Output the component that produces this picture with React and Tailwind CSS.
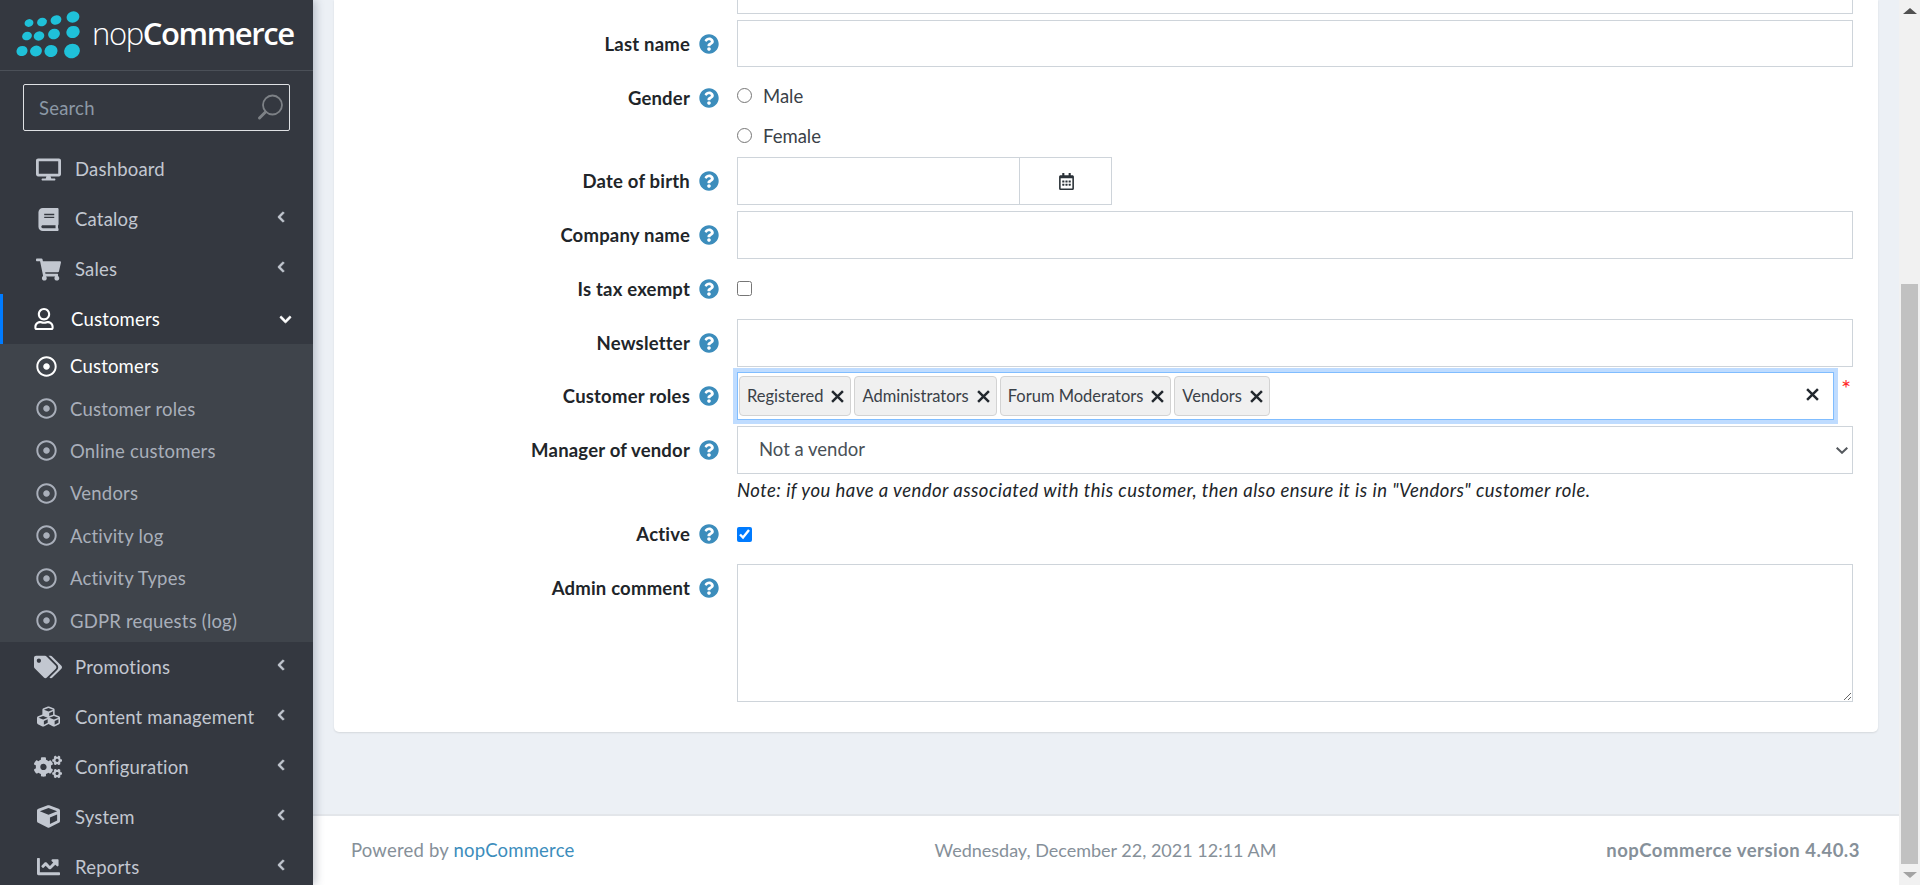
import React from "react";
import {
  FaDesktop, FaBook, FaShoppingCart, FaRegUser, FaTags, FaCubes, FaCogs, FaCube, FaChartLine,
  FaRegDotCircle, FaChevronLeft, FaChevronDown, FaQuestionCircle, FaRegCalendarAlt,
} from "react-icons/fa";

const font = "font-['Lato','Liberation_Sans',sans-serif]";

function Logo() {
  const dots = [
    [29, 24, 4.5, 3.8], [42, 23, 5, 4.2], [56, 21, 5.5, 4.6], [73, 18, 6.5, 5.6],
    [27, 37, 5, 4.2], [39, 37, 5.4, 4.6], [54, 35, 6, 5.2], [73, 33, 6.8, 6],
    [22, 52, 5.6, 5], [36, 52, 6, 5.4], [51, 52, 6.6, 6], [72, 52, 8, 7.2],
  ];
  return (
    <svg width="84" height="70" viewBox="0 0 84 70" className="shrink-0">
      {dots.map(([x, y, rx, ry]) => (
        <ellipse key={`${x}-${y}`} cx={x} cy={y} rx={rx} ry={ry} fill="#1fc1d9" transform={`rotate(-20 ${x} ${y})`} />
      ))}
    </svg>
  );
}

function SearchGlyph() {
  return (
    <svg width="28" height="28" viewBox="0 0 28 28" fill="none" stroke="#7d8186">
      <circle cx="16.5" cy="11" r="9.5" strokeWidth="1.8" />
      <path d="M9.5 18 L3.5 24" strokeWidth="3" strokeLinecap="round" />
    </svg>
  );
}

function CloseGlyph({ size = 13 }) {
  return (
    <svg width={size} height={size} viewBox="0 0 12 12" fill="none" stroke="#22282e" strokeWidth="2.3" className="shrink-0">
      <path d="M1 1 L11 11 M11 1 L1 11" />
    </svg>
  );
}

function NavItem({ icon: Icon, label, size = 25 }) {
  return (
    <div className="h-[50px] flex items-center text-[#c2c7d0]">
      <span className="w-[75px] flex justify-center pl-[21px] shrink-0">
        <Icon style={{ fontSize: size }} />
      </span>
      <span className="flex-1 whitespace-nowrap pt-[2px]">{label}</span>
    </div>
  );
}

function ParentItem({ icon, label, size }) {
  return (
    <div className="relative">
      <NavItem icon={icon} label={label} size={size} />
      <FaChevronLeft className="absolute right-[26px] top-[17px] text-[#c2c7d0] text-[12px] stroke-current stroke-[30]" />
    </div>
  );
}

function SubItem({ label, active }) {
  return (
    <div className={`h-[42.4px] flex items-center pl-[36px] gap-[13px] ${active ? "text-white" : "text-[#a9afba]"}`}>
      <FaRegDotCircle className="text-[21px] shrink-0" />
      <span className="whitespace-nowrap pt-[2px]">{label}</span>
    </div>
  );
}

function Sidebar() {
  return (
    <aside className="w-[313px] shrink-0 h-[885px] bg-[#343840] relative z-10 shadow-[3px_0_8px_rgba(40,50,80,0.25)] overflow-hidden text-[18.5px] tracking-[0.2px]">
      <div className="h-[71px] border-b border-[#4b5058] flex items-center pb-[3px]">
        <Logo />
        <span className="text-white text-[31px] leading-none ml-[8px] font-['Open_Sans',sans-serif] tracking-[-1.4px]">
          <span className="font-light">nop</span><span className="font-semibold">Commerce</span>
        </span>
      </div>
      <div className="mx-[23px] mt-[13px] h-[47px] border border-[#dfe1e4] rounded-[2px] flex items-center justify-between pl-[15px] pr-[5px] text-[#8c98a6]">
        <span className="pt-[2px]">Search</span>
        <SearchGlyph />
      </div>
      <div className="mt-[13px]">
        <NavItem icon={FaDesktop} label="Dashboard" />
        <ParentItem icon={FaBook} label="Catalog" size={23} />
        <ParentItem icon={FaShoppingCart} label="Sales" />
        <div className="h-[50px] border-l-[3px] border-[#007bff] flex items-center text-white relative">
          <span className="w-[68px] flex justify-center pl-[14px] shrink-0">
            <FaRegUser className="text-[22px]" />
          </span>
          <span className="pt-[2px]">Customers</span>
          <FaChevronDown className="absolute right-[21px] top-[19px] text-[13px] stroke-current stroke-[30]" />
        </div>
        <div className="bg-[#3f444b] pt-[1px]">
          <SubItem label="Customers" active />
          <SubItem label="Customer roles" />
          <SubItem label="Online customers" />
          <SubItem label="Vendors" />
          <SubItem label="Activity log" />
          <SubItem label="Activity Types" />
          <SubItem label="GDPR requests (log)" />
        </div>
        <ParentItem icon={FaTags} label="Promotions" size={28} />
        <ParentItem icon={FaCubes} label="Content management" size={23} />
        <ParentItem icon={FaCogs} label="Configuration" size={28} />
        <ParentItem icon={FaCube} label="System" size={23} />
        <ParentItem icon={FaChartLine} label="Reports" size={23} />
      </div>
    </aside>
  );
}

function Label({ text, height = "h-[48px]" }) {
  return (
    <div className={`w-[403px] shrink-0 ${height} flex items-center justify-end pr-[18px] gap-[9px]`}>
      <span className="font-bold text-[#212529] whitespace-nowrap pt-[2px] tracking-[0.2px]">{text}</span>
      <FaQuestionCircle className="text-[#3c8dbc] text-[20px] shrink-0" />
    </div>
  );
}

const inputClass = "block w-full border border-[#ced4da] bg-white";

function Chip({ text }) {
  return (
    <span className="h-[40px] flex items-center gap-[8px] pl-[7px] pr-[6px] bg-[#f0f0f0] border border-[#d3d3d3] rounded-[4px] text-[#3a4148] whitespace-nowrap text-[16.5px]">
      {text}
      <CloseGlyph />
    </span>
  );
}

function CustomerForm() {
  return (
    <section className="bg-white mx-[21px] rounded-b-[5px] shadow-[0_1px_2px_rgba(0,0,0,0.1)] pr-[25px] pb-[30px] text-[18.5px] text-[#212529]">
      <div className="ml-[403px] h-[14px] border border-t-0 border-[#ced4da]" />

      <div className="flex mt-[6px]">
        <Label text="Last name" height="h-[47px]" />
        <input className={`${inputClass} h-[47px]`} />
      </div>

      <div className="flex mt-[9px]">
        <Label text="Gender" height="h-[44px]" />
        <div className="flex flex-col">
          <label className="h-[40px] flex items-center gap-[11px] text-[#3a4148]">
            <input type="radio" name="gender" className="w-[15px] h-[15px] m-0 -mt-[2px]" />
            <span className="pt-[2px]">Male</span>
          </label>
          <label className="h-[40px] flex items-center gap-[11px] text-[#3a4148]">
            <input type="radio" name="gender" className="w-[15px] h-[15px] m-0 -mt-[2px]" />
            <span className="pt-[2px]">Female</span>
          </label>
        </div>
      </div>

      <div className="flex mt-[1px]">
        <Label text="Date of birth" />
        <div className="flex w-[375px] h-[48px] border border-[#ced4da]">
          <input className="w-[282px] h-full border-r border-[#ced4da]" />
          <div className="flex-1 flex items-center justify-center pl-[2px] text-[#2b3238]">
            <FaRegCalendarAlt className="text-[17px]" />
          </div>
        </div>
      </div>

      <div className="flex mt-[6px]">
        <Label text="Company name" />
        <input className={`${inputClass} h-[48px]`} />
      </div>

      <div className="flex mt-[6px]">
        <Label text="Is tax exempt" />
        <div className="h-[48px] flex items-center">
          <input type="checkbox" className="w-[15px] h-[15px] m-0 -mt-[2px]" />
        </div>
      </div>

      <div className="flex mt-[6px]">
        <Label text="Newsletter" />
        <input className={`${inputClass} h-[48px]`} />
      </div>

      <div className="flex mt-[5px] relative">
        <Label text="Customer roles" />
        <div className="w-[1097px] h-[48px] border border-[#80bdff] ring-4 ring-[#bfdcff] flex items-center pl-[1px] gap-[3px] relative">
          <Chip text="Registered" />
          <Chip text="Administrators" />
          <Chip text="Forum Moderators" />
          <Chip text="Vendors" />
          <span className="absolute right-[14px] top-[15px]"><CloseGlyph /></span>
        </div>
        <span className="absolute right-0 w-[12px] top-[2px] text-[#ff2a2a] text-[24px] leading-[28px]">*</span>
      </div>

      <div className="flex mt-[6px]">
        <Label text="Manager of vendor" />
        <div className="flex-1">
          <div className="relative">
            <select className="block w-full h-[48px] border border-[#ced4da] bg-white pl-[21px] text-[#495057] appearance-none rounded-none">
              <option>Not a vendor</option>
            </select>
            <svg width="12" height="7" viewBox="0 0 12 7" fill="none" stroke="#55595e" strokeWidth="2" className="absolute right-[5px] top-[21px]">
              <path d="M0.7 0.7 L6 5.8 L11.3 0.7" />
            </svg>
          </div>
          <p className="italic leading-[32px] whitespace-nowrap tracking-[0.45px]">
            Note: if you have a vendor associated with this customer, then also ensure it is in "Vendors" customer role.
          </p>
        </div>
      </div>

      <div className="flex mt-[4px]">
        <Label text="Active" />
        <div className="h-[48px] flex items-center">
          <input type="checkbox" defaultChecked className="w-[15px] h-[15px] m-0 accent-[#007bff]" />
        </div>
      </div>

      <div className="flex mt-[6px]">
        <Label text="Admin comment" height="h-[47px]" />
        <textarea className="block w-full h-[138px] border border-[#ced4da]" />
      </div>
    </section>
  );
}

function Footer() {
  return (
    <footer className="h-[71px] bg-white border-t-2 border-[#e3e6ea] grid grid-cols-3 items-center pl-[38px] pr-[39px] text-[18.5px] text-[#869099]">
      <div className="tracking-[0.2px]">Powered by <span className="text-[#3c8dbc]">nopCommerce</span></div>
      <div className="text-center whitespace-nowrap text-[18px]">Wednesday, December 22, 2021 12:11 AM</div>
      <div className="text-right font-bold tracking-[0.5px]">nopCommerce version 4.40.3</div>
    </footer>
  );
}

function ScrollBar() {
  return (
    <div className="w-[21px] shrink-0 h-[885px] bg-[#f1f1f1] flex flex-col">
      <div className="h-[21px] flex items-center justify-center">
        <div className="w-0 h-0 border-x-[7px] border-x-transparent border-b-[6px] border-b-[#505050]" />
      </div>
      <div className="h-[263px]" />
      <div className="h-[580px] mx-[2px] bg-[#c1c1c1]" />
      <div className="h-[21px] flex items-center justify-center">
        <div className="w-0 h-0 border-x-[7px] border-x-transparent border-t-[6px] border-t-[#a3a3a3]" />
      </div>
    </div>
  );
}

export default function App() {
  return (
    <div className={`flex h-[885px] overflow-hidden bg-[#ecf0f5] ${font}`}>
      <Sidebar />
      <main className="flex-1 min-w-0 flex flex-col justify-between">
        <CustomerForm />
        <Footer />
      </main>
      <ScrollBar />
    </div>
  );
}
